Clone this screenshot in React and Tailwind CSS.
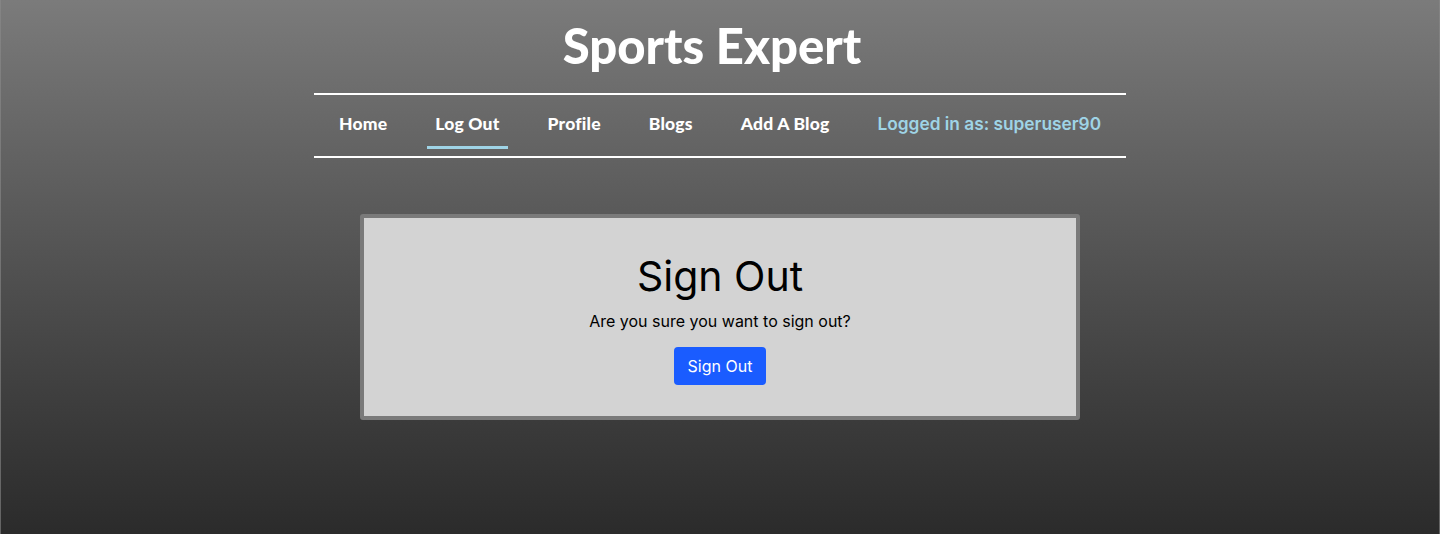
import React from "react";

const links = ["Home", "Log Out", "Profile", "Blogs", "Add A Blog"];

export default function App() {
  return (
    <div className="min-h-[534px] bg-gradient-to-b from-[#7b7b7b] to-[#2b2b2b] border-x border-[#8a8a8a]/60 font-['Inter',sans-serif]">
      <header className="flex flex-col items-center pt-[16px]">
        <h1 className="pr-[16px] text-[49px] leading-[58px] font-black text-white tracking-[0px] font-['Lato',sans-serif]">
          Sports Expert
        </h1>
        <nav className="mt-[19px] w-[812px] border-y-2 border-white flex justify-center items-center gap-[32px] h-[65px]">
          {links.map((l) => (
            <a
              key={l}
              href="#"
              className={`px-2 pt-0 pb-[9px] mt-[9px] text-[17.5px] font-black text-white tracking-[0.2px] font-['Lato',sans-serif] border-b-[3px] ${
                l === "Log Out" ? "border-[#9fd4e6]" : "border-transparent"
              }`}
            >
              {l}
            </a>
          ))}
          <span className="px-2 pb-[4px] text-[17.3px] font-semibold text-[#9fd4e6]">
            Logged in as: superuser90
          </span>
        </nav>
      </header>
      <main className="flex justify-center mt-[56px]">
        <div className="w-[720px] h-[206px] bg-[#d3d3d3] border-4 border-[#7a7a7a] rounded-[3px] flex flex-col items-center pt-[34px]">
          <h2 className="text-[41px] leading-[48px] text-black">Sign Out</h2>
          <p className="mt-[9px] text-[16px] text-black">Are you sure you want to sign out?</p>
          <button className="mt-[14px] w-[92px] h-[38px] bg-[#1a5cff] text-white text-[16px] rounded-[4px]">
            Sign Out
          </button>
        </div>
      </main>
    </div>
  );
}
